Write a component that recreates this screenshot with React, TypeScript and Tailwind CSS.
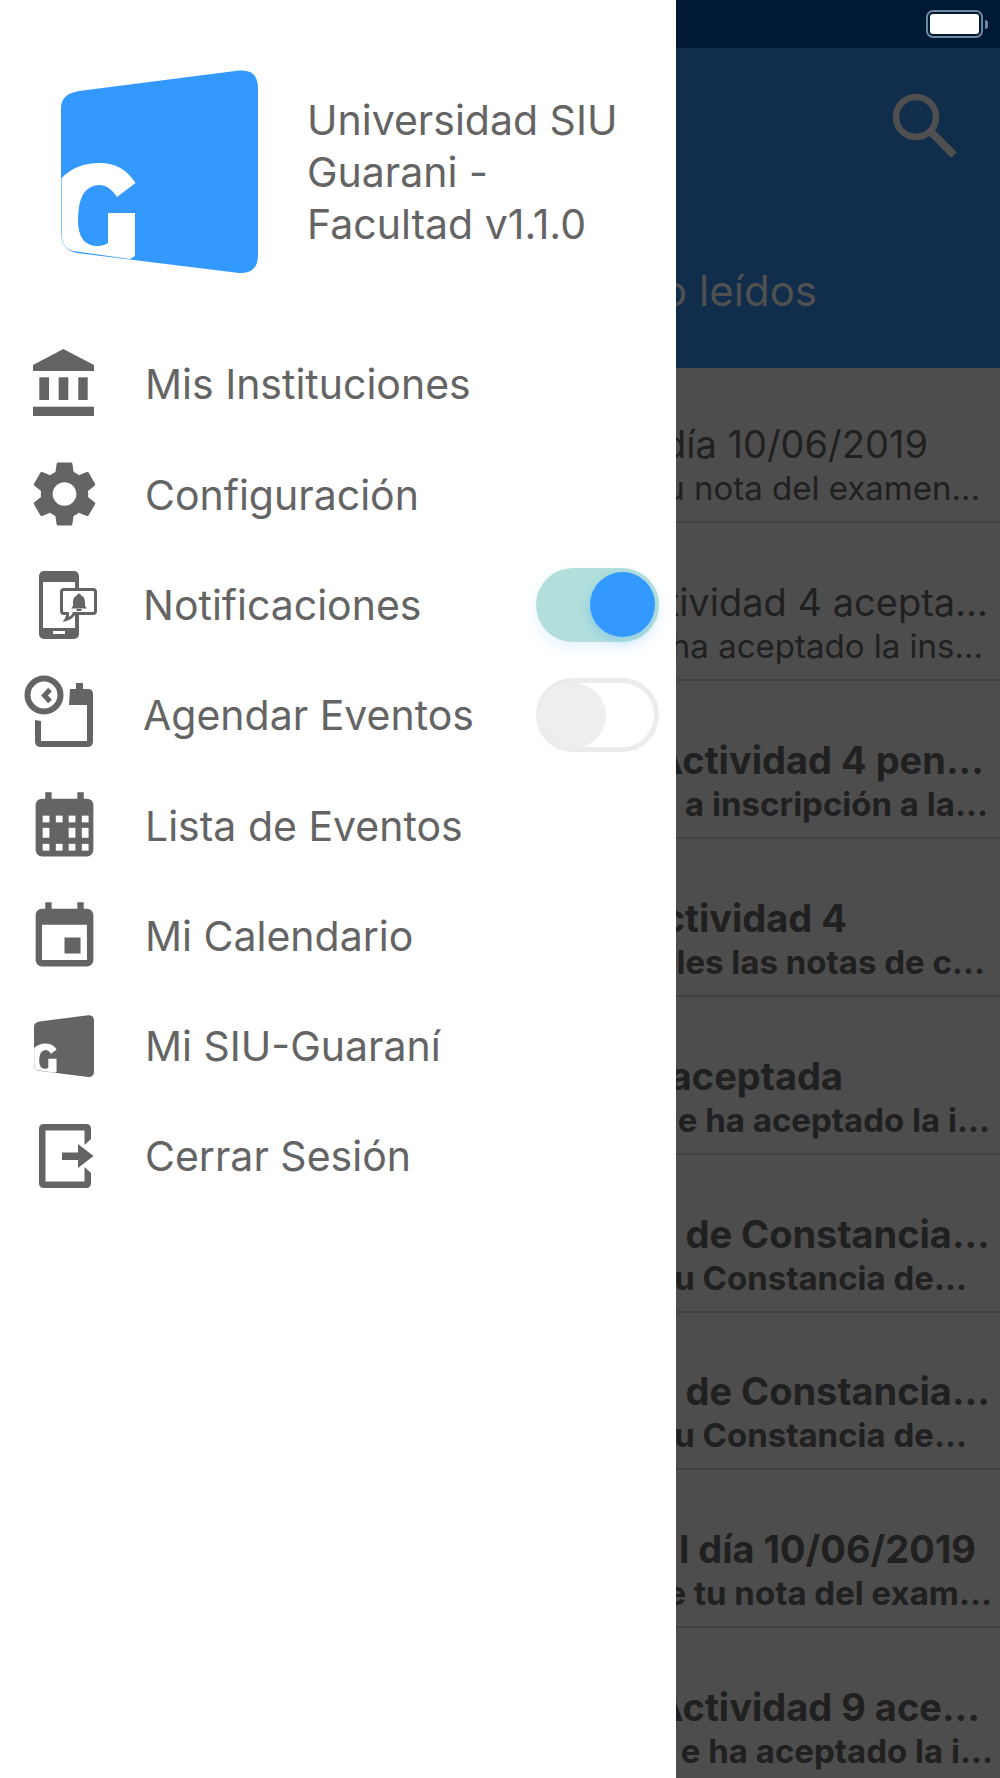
import React from "react";
import { MdEvent, MdSettings } from "react-icons/md";

const GRAY = "#646464";

function Logo({ bg, fg, className }: { bg: string; fg: string; className: string }) {
  return (
    <svg viewBox="0 0 197 203" className={className}>
      <path
        fill={bg}
        d="M18 21 L178 0.5 Q197 -1 197 18 V185 Q197 204 178 203 L16 183 Q0 180 0 162 V38 Q0 24 18 21Z"
      />
      <path
        fill={fg}
        d="M0.6 108 Q15 93 39 93 Q62 93 74.5 113 L56 127 Q48 115 39 115 Q17 115 17 150 Q17 177 38 176 Q43 176 47 173 V143 H74 V186 L69 189 L12 181 Q1 178 0.6 165Z"
      />
    </svg>
  );
}

function BankIcon() {
  return (
    <svg viewBox="0 0 80 80" className="w-[80px] h-[80px]">
      <polygon points="39.3,5 70,21 70,27 9,27 9,21" fill={GRAY} />
      <rect x="15.3" y="33.3" width="9.7" height="22.7" fill={GRAY} />
      <rect x="34.7" y="33.3" width="9.6" height="22.7" fill={GRAY} />
      <rect x="54.3" y="33.3" width="9.4" height="22.7" fill={GRAY} />
      <rect x="9" y="62.7" width="61" height="9.3" fill={GRAY} />
    </svg>
  );
}

function PhoneBell() {
  return (
    <svg viewBox="0 0 80 80" className="w-[80px] h-[80px]">
      <rect x="15" y="6" width="40" height="68" rx="5" fill={GRAY} />
      <rect x="19" y="17" width="32" height="46" fill="#fff" />
      <rect x="29" y="66" width="12" height="3" fill="#fff" />
      <path
        d="M40 24.5 H69 Q71.5 24.5 71.5 27 V46 Q71.5 48.5 69 48.5 H50 Q48 53 42 54.5 Q44 51.5 43.5 48.5 H40 Q37.5 48.5 37.5 46 V27 Q37.5 24.5 40 24.5Z"
        fill="#fff"
        stroke={GRAY}
        strokeWidth="3"
      />
      <path
        fill={GRAY}
        d="M55 28.5c1 0 1.8.8 1.8 1.8 2.8 1 4.2 3.5 4.2 6.7v4l2 2.5H47l2-2.5v-4c0-3.2 1.4-5.7 4.2-6.7 0-1 .8-1.8 1.8-1.8z"
      />
      <rect x="52.5" y="44" width="5" height="2" fill={GRAY} />
    </svg>
  );
}

function ClockCalendar() {
  return (
    <svg viewBox="0 0 80 80" className="w-[80px] h-[80px]">
      <circle cx="20" cy="20" r="16.5" fill="none" stroke={GRAY} strokeWidth="6" />
      <path d="M26 14.5 L20.5 20.5 L26 26.5" fill="none" stroke={GRAY} strokeWidth="5" />
      <rect x="52" y="8" width="7" height="7" fill={GRAY} />
      <path
        fill={GRAY}
        d="M46 14 H64 Q69 14 69 19 V66 Q69 72 63 72 H17 Q11 72 11 66 V45 L17 46 V66 H63 V30 H45 Z"
      />
    </svg>
  );
}

function CalendarGrid() {
  return (
    <svg viewBox="0 0 24 24" className="w-[77px] h-[77px] mt-[4px] ml-[1px]">
      <rect x="3" y="3" width="18" height="18" rx="2" fill={GRAY} />
      <rect x="6" y="1" width="2" height="3" fill={GRAY} />
      <rect x="16" y="1" width="2" height="3" fill={GRAY} />
      <g fill="#fff">
        <rect x="5.2" y="8.3" width="2.1" height="2.1" />
        <rect x="9.3" y="8.3" width="2.1" height="2.1" />
        <rect x="13.3" y="8.3" width="2.1" height="2.1" />
        <rect x="17.4" y="8.3" width="2.1" height="2.1" />
        <rect x="5.2" y="12.1" width="2.1" height="3.1" />
        <rect x="13.3" y="12.1" width="2.1" height="3.1" />
        <rect x="17.4" y="12.1" width="2.1" height="3.1" />
        <rect x="5.2" y="17.1" width="2.1" height="2.1" />
        <rect x="9.3" y="17.1" width="2.1" height="2.1" />
        <rect x="13.3" y="17.1" width="2.1" height="2.1" />
        <rect x="17.4" y="17.1" width="2.1" height="2.1" />
      </g>
    </svg>
  );
}

function ExitIcon() {
  return (
    <svg viewBox="0 0 80 80" className="w-[80px] h-[80px]">
      <path
        fill={GRAY}
        d="M20 8 H62 Q67 8 67 13 V23 L60.5 29 V14.5 H21.5 V65.5 H60.5 V51 L67 57 V67 Q67 72 62 72 H20 Q15 72 15 67 V13 Q15 8 20 8Z"
      />
      <rect x="38" y="36.5" width="17" height="7.5" fill={GRAY} />
      <polygon points="54,28 69.5,40 54,52" fill={GRAY} />
    </svg>
  );
}

function Toggle({ on }: { on: boolean }) {
  if (on) {
    return (
      <div className="flex items-center justify-end w-[123px] h-[74px] rounded-full bg-[#b2dfdb] pr-[4px] shadow-[0_6px_14px_rgba(51,153,255,0.12)]">
        <div className="w-[65px] h-[65px] rounded-full bg-[#3399ff] shadow-[-2px_4px_10px_rgba(51,153,255,0.25)]" />
      </div>
    );
  }
  return (
    <div className="flex items-center w-[123px] h-[74px] rounded-full bg-white border-[5px] border-[#ececec]">
      <div className="w-[65px] h-[65px] rounded-full bg-[#eeeeee]" />
    </div>
  );
}

const menu = [
  { label: "Mis Instituciones", icon: <BankIcon />, textClass: "ml-[41px]" },
  { label: "Configuración", icon: <MdSettings color={GRAY} className="w-[80px] h-[80px] ml-[1px]" />, textClass: "ml-[41px]" },
  { label: "Notificaciones", icon: <PhoneBell />, textClass: "ml-[39px]", toggle: true },
  { label: "Agendar Eventos", icon: <ClockCalendar />, textClass: "ml-[39px]", toggle: false },
  { label: "Lista de Eventos", icon: <CalendarGrid />, textClass: "ml-[41px]" },
  { label: "Mi Calendario", icon: <MdEvent color={GRAY} className="w-[77px] h-[77px] mt-[4px]" />, textClass: "ml-[41px]" },
  { label: "Mi SIU-Guaraní", icon: <Logo bg={GRAY} fg="#fff" className="w-[60px] h-[62px]" />, textClass: "ml-[41px]" },
  { label: "Cerrar Sesión", icon: <ExitIcon />, textClass: "ml-[41px]" },
];

const rows = [
  { title: "día 10/06/2019", sub: "u nota del examen...", bold: false, height: "h-[155px]", titlePad: "pr-[72px]", subPad: "pr-[20px]" },
  { title: "tividad 4 acepta...", sub: "ha aceptado la ins...", bold: false, height: "h-[158.4px]", titlePad: "pr-[12px]", subPad: "pr-[17px]" },
  { title: "Actividad 4 pen...", sub: "a inscripción a la...", bold: true, height: "h-[157.8px]", titlePad: "pr-[16px]", subPad: "pr-[12px]" },
  { title: "ctividad 4", sub: "les las notas de c...", bold: true, height: "h-[157.8px]", titlePad: "pr-[153px]", subPad: "pr-[15px]" },
  { title: "aceptada", sub: "e ha aceptado la i...", bold: true, height: "h-[157.8px]", titlePad: "pr-[157px]", subPad: "pr-[10px]" },
  { title: "de Constancia...", sub: "u Constancia de...", bold: true, height: "h-[157.8px]", titlePad: "pr-[10px]", subPad: "pr-[33px]" },
  { title: "de Constancia...", sub: "u Constancia de...", bold: true, height: "h-[157.8px]", titlePad: "pr-[10px]", subPad: "pr-[33px]" },
  { title: "l día 10/06/2019", sub: "e tu nota del exam...", bold: true, height: "h-[157.8px]", titlePad: "pr-[24px]", subPad: "pr-[8px]" },
  { title: "Actividad 9 ace...", sub: "e ha aceptado la i...", bold: true, height: "h-[157.8px]", titlePad: "pr-[20px]", subPad: "pr-[7px]" },
];

export default function App() {
  return (
    <div className="flex w-[1000px] h-[1778px] overflow-hidden bg-white font-[Inter,sans-serif]">
      {/* drawer */}
      <div className="w-[676px] shrink-0 bg-white">
        <div className="flex items-center h-[329px] pt-[14px]">
          <Logo bg="#3399ff" fg="#fff" className="ml-[61px] w-[197px] h-[203px] shrink-0" />
          <div className="ml-[49px] text-[41px] leading-[52px] text-[#646464]">
            <div>Universidad SIU</div>
            <div>Guarani -</div>
            <div>Facultad v1.1.0</div>
          </div>
        </div>
        <div className="flex flex-col">
          {menu.map((item) => (
            <div key={item.label} className="flex items-center h-[110.3px] pr-[17px]">
              <div className="flex items-center justify-center w-[80px] h-[80px] ml-[24px] shrink-0">{item.icon}</div>
              <div className={`flex-1 pt-[2px] text-[41px] text-[#646464] ${item.textClass}`}>{item.label}</div>
              {item.toggle !== undefined && <Toggle on={item.toggle} />}
            </div>
          ))}
        </div>
      </div>

      {/* dimmed list behind the drawer */}
      <div className="flex-1 min-w-0 flex flex-col overflow-hidden bg-[#4d4d4d]">
        <div className="flex items-center justify-end h-[48px] shrink-0 bg-[#001a35] pr-[12px]">
          <div className="flex items-center">
            <div className="w-[57px] h-[28px] rounded-[7px] border-2 border-[#6f869c] p-[2px]">
              <div className="w-full h-full rounded-[3px] bg-white" />
            </div>
            <div className="w-[3px] h-[9px] ml-[2px] rounded-r-full bg-[#6f869c]" />
          </div>
        </div>
        <div className="flex flex-col justify-between h-[320px] shrink-0 bg-[#102d4b]">
          <div className="flex justify-end pt-[44px] pr-[40px]">
            <svg viewBox="0 0 68 68" className="w-[68px] h-[68px]">
              <circle cx="24" cy="25" r="20" fill="none" stroke="#4f4f4f" strokeWidth="6.5" />
              <path d="M40 41 L62 63" fill="none" stroke="#4f4f4f" strokeWidth="8" />
            </svg>
          </div>
          <div className="flex justify-end overflow-hidden pr-[183px] pb-[53px] text-[42px] leading-[48px] whitespace-nowrap text-[#505050]">
            o leídos
          </div>
        </div>
        {rows.map((row, i) => (
          <div
            key={i}
            className={`flex flex-col justify-end shrink-0 pb-[12px] border-b-2 border-[#414141] text-[#202020] whitespace-nowrap ${row.height} ${
              row.bold ? "font-bold" : ""
            }`}
          >
            <div className={`flex justify-end overflow-hidden text-[38px] leading-[46px] ${row.titlePad}`}>{row.title}</div>
            <div className={`flex justify-end overflow-hidden text-[33px] leading-[42px] ${row.subPad}`}>{row.sub}</div>
          </div>
        ))}
      </div>
    </div>
  );
}
